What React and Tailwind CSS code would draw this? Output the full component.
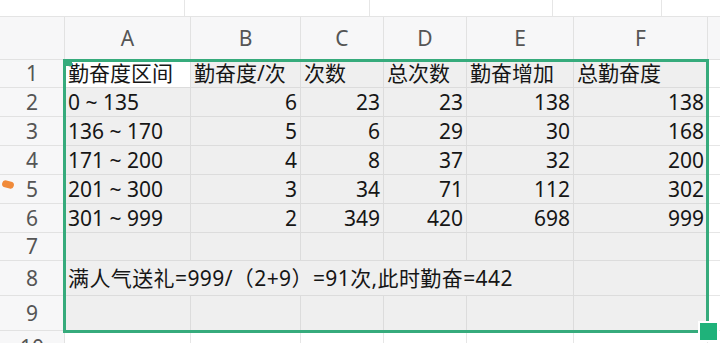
import React from "react";

const cols = [
  { key: "A", w: "w-[126px]" },
  { key: "B", w: "w-[110px]" },
  { key: "C", w: "w-[83px]" },
  { key: "D", w: "w-[83px]" },
  { key: "E", w: "w-[107px]" },
  { key: "F", w: "w-[134px]" },
];

const rows = [
  { n: 1, h: "h-[28px]", cells: ["勤奋度区间", "勤奋度/次", "次数", "总次数", "勤奋增加", "总勤奋度"], text: true },
  { n: 2, h: "h-[29px]", cells: ["0 ~ 135", "6", "23", "23", "138", "138"] },
  { n: 3, h: "h-[29px]", cells: ["136 ~ 170", "5", "6", "29", "30", "168"] },
  { n: 4, h: "h-[29px]", cells: ["171 ~ 200", "4", "8", "37", "32", "200"] },
  { n: 5, h: "h-[29px]", cells: ["201 ~ 300", "3", "34", "71", "112", "302"] },
  { n: 6, h: "h-[29px]", cells: ["301 ~ 999", "2", "349", "420", "698", "999"] },
  { n: 7, h: "h-[28px]", cells: ["", "", "", "", "", ""] },
];

function RowHead({ n, h }) {
  return (
    <div className={`w-[65px] shrink-0 ${h} flex items-center justify-center border-r border-b border-[#e2e2e2] bg-[#f7f7f8] text-[21px] text-[#555]`}>
      {n}
    </div>
  );
}

function App() {
  return (
    <div className="relative w-[720px] h-[343px] overflow-hidden bg-white font-['Noto_Sans','Noto_Sans_CJK_SC',sans-serif] leading-none">
      {/* top strip */}
      <div className="flex h-[17px] border-b border-[#e4e4e4]">
        <div className="w-[185px] border-r border-[#e6e6e6]"></div>
        <div className="w-[185px] border-r border-[#e6e6e6]"></div>
        <div className="w-[183px] border-r border-[#e6e6e6]"></div>
        <div className="w-[109px] border-r border-[#e6e6e6]"></div>
        <div className="flex-1"></div>
      </div>

      {/* column headers */}
      <div className="flex h-[43px] bg-[#f7f7f8] border-b border-[#e2e2e2]">
        <div className="w-[65px] shrink-0 border-r border-[#e2e2e2]"></div>
        {cols.map((c) => (
          <div key={c.key} className={`${c.w} shrink-0 flex items-center justify-center border-r border-[#e2e2e2] text-[21px] text-[#555]`}>
            {c.key}
          </div>
        ))}
        <div className="flex-1"></div>
      </div>

      {rows.map((r) => (
        <div key={r.n} className="flex">
          <RowHead n={r.n} h={r.h} />
          {r.cells.map((v, i) => {
            const active = r.n === 1 && i === 0;
            const right = !r.text && i > 0;
            return (
              <div
                key={i}
                className={`${cols[i].w} shrink-0 ${r.h} flex items-center px-[3px] border-r border-b border-[#dcdcdc] text-[21px] text-[#161616] whitespace-nowrap ${active ? "bg-white" : "bg-[#efefef]"} ${right ? "justify-end" : "justify-start"}`}
              >
                {v}
              </div>
            );
          })}
          <div className={`flex-1 ${r.h} border-b border-[#e6e6e6]`}></div>
        </div>
      ))}

      {/* row 8 */}
      <div className="flex">
        <RowHead n={8} h="h-[35px]" />
        <div className="w-[509px] shrink-0 h-[35px] flex items-center px-[3px] border-r border-b border-[#dcdcdc] bg-[#efefef] text-[21px] tracking-[0.4px] text-[#161616] whitespace-nowrap">
          满人气送礼=999/（2+9）=91次,此时勤奋=442
        </div>
        <div className="w-[134px] shrink-0 h-[35px] border-r border-b border-[#dcdcdc] bg-[#efefef]"></div>
        <div className="flex-1 h-[35px] border-b border-[#e6e6e6]"></div>
      </div>

      {/* row 9 */}
      <div className="flex">
        <RowHead n={9} h="h-[35px]" />
        {cols.map((c) => (
          <div key={c.key} className={`${c.w} shrink-0 h-[35px] border-r border-b border-[#dcdcdc] bg-[#efefef]`}></div>
        ))}
        <div className="flex-1 h-[35px] border-b border-[#e6e6e6]"></div>
      </div>

      {/* row 10 */}
      <div className="flex">
        <div className="w-[65px] shrink-0 h-[35px] flex items-start justify-center pt-[6px] border-r border-[#e2e2e2] bg-[#f7f7f8] text-[21px] text-[#555]">
          10
        </div>
        {cols.map((c) => (
          <div key={c.key} className={`${c.w} shrink-0 h-[35px] border-r border-[#e6e6e6]`}></div>
        ))}
      </div>

      {/* selection frame */}
      <div className="absolute left-[63px] top-[59px] w-[646px] h-[274px] border-[3px] border-[#36ab7c] pointer-events-none"></div>
      <div className="absolute left-[63px] top-[59px] w-[9px] h-[7px] bg-[#36ab7c]"></div>
      <div className="absolute left-[698px] top-[321px] w-[21px] h-[21px] bg-[#1fb27a] border-2 border-white"></div>

      {/* orange mark */}
      <div className="absolute left-[2px] top-[181px] w-[12px] h-[7px] rounded-full bg-[#f08a3a] rotate-[15deg]"></div>
    </div>
  );
}

export default App;
